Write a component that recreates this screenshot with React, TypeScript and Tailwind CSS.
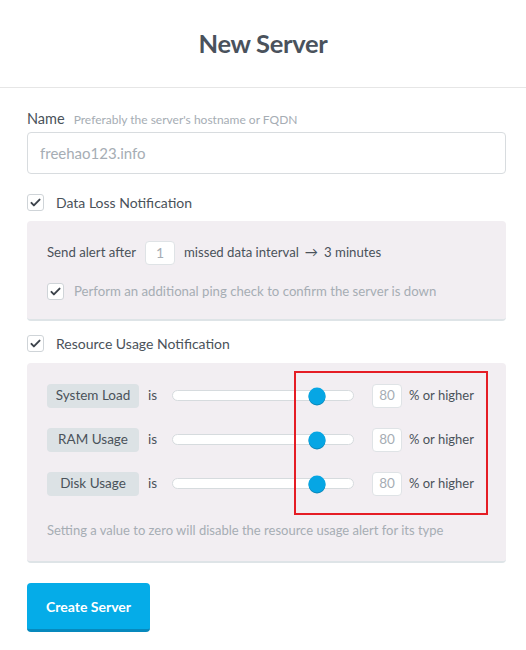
import { useState } from "react";

function Check({ checked = true }: { checked?: boolean }) {
  return (
    <span className="flex h-[17px] w-[17px] shrink-0 items-center justify-center rounded-[3px] border border-[#cfd4d8] bg-white">
      {checked && (
        <svg viewBox="0 0 16 16" className="h-[13px] w-[13px]">
          <path
            d="M3 8.5l3 3 7-7"
            fill="none"
            stroke="#3d444c"
            strokeWidth="2.4"
            strokeLinecap="round"
            strokeLinejoin="round"
          />
        </svg>
      )}
    </span>
  );
}

function UsageRow({ label, value }: { label: string; value: number }) {
  return (
    <div className="flex h-[24px] items-center">
      <span className="flex h-[24px] w-[92px] items-center justify-center rounded-[4px] bg-[#dce2e5] text-[13.5px] text-[#4a525a]">
        {label}
      </span>
      <span className="ml-[9px] w-[24px] text-[13.5px] text-[#4a525a]">is</span>
      <div className="relative h-[11px] w-[182px] rounded-full border border-[#d6dbde] bg-white">
        <span
          className="absolute top-1/2 h-[17px] w-[17px] -translate-x-1/2 -translate-y-1/2 rounded-full bg-[#06a6e4] shadow-[0_1px_0_#0a86b8]"
          style={{ left: `${value}%` }}
        />
      </div>
      <span className="ml-[18px] flex h-[24px] w-[30px] items-center justify-center rounded-[4px] border border-[#dfe3e6] bg-white text-[13.5px] text-[#a6adb4]">
        {value}
      </span>
      <span className="ml-[7px] text-[13px] text-[#4a525a]">% or higher</span>
    </div>
  );
}

export default function App() {
  const [name, setName] = useState("");
  return (
    <div
      className="min-h-[650px] w-[526px] bg-white text-[#4a525a]"
      style={{ fontFamily: "Lato, 'Open Sans', sans-serif" }}
    >
      <header className="flex h-[88px] items-center justify-center border-b border-[#e6e6e6]">
        <h1 className="text-[25.5px] font-bold tracking-[-0.3px] text-[#4a525c]">New Server</h1>
      </header>

      <div className="pl-[27px] pr-[20px] pt-[20px]">
        <div className="flex items-baseline gap-[9px]">
          <span className="text-[14.5px]">Name</span>
          <span className="text-[12px] text-[#a6adb4]">Preferably the server's hostname or FQDN</span>
        </div>
        <input
          value={name}
          onChange={(e) => setName(e.target.value)}
          placeholder="freehao123.info"
          className="mt-[2px] h-[42px] w-full rounded-[4px] border border-[#d8dcdf] px-[12px] text-[15px] text-[#4a525a] outline-none placeholder:text-[#a6adb4]"
        />

        <label className="mt-[18px] flex items-center gap-[12px]">
          <Check />
          <span className="text-[14px]">Data Loss Notification</span>
        </label>

        <div className="mt-[8px] rounded-[4px] border-b-2 border-[#dee4e7] bg-[#f2eef2] px-[20px] pb-[17px] pt-[20px]">
          <div className="flex items-center text-[13.2px]">
            <span>Send alert after</span>
            <span className="ml-[9px] flex h-[24px] w-[30px] items-center justify-center rounded-[4px] border border-[#dfe3e6] bg-white text-[14px] text-[#a6adb4]">
              1
            </span>
            <span className="ml-[9px]">missed data interval</span>
            <span className="mx-[6px]">→</span>
            <span>3 minutes</span>
          </div>
          <label className="mt-[17px] flex items-center gap-[10px]">
            <Check />
            <span className="text-[13.2px] text-[#a6adb4]">
              Perform an additional ping check to confirm the server is down
            </span>
          </label>
        </div>

        <label className="mt-[12px] flex items-center gap-[12px]">
          <Check />
          <span className="text-[14px]">Resource Usage Notification</span>
        </label>

        <div className="relative mt-[9px] rounded-[4px] border-b-2 border-[#dee4e7] bg-[#f2eef2] px-[20px] pb-[21px] pt-[21px]">
          <div className="flex flex-col gap-[20px]">
            <UsageRow label="System Load" value={80} />
            <UsageRow label="RAM Usage" value={80} />
            <UsageRow label="Disk Usage" value={80} />
          </div>
          <p className="mt-[25px] text-[13px] text-[#a6adb4]">
            Setting a value to zero will disable the resource usage alert for its type
          </p>
          <div className="pointer-events-none absolute left-[267px] top-[8px] h-[144px] w-[194px] border-2 border-[#e51d25]" />
        </div>

        <button className="mt-[20px] h-[49px] w-[123px] rounded-[4px] border-b-[3px] border-[#0789bd] bg-[#05ace8] text-[14px] font-bold text-white">
          Create Server
        </button>
      </div>
    </div>
  );
}
